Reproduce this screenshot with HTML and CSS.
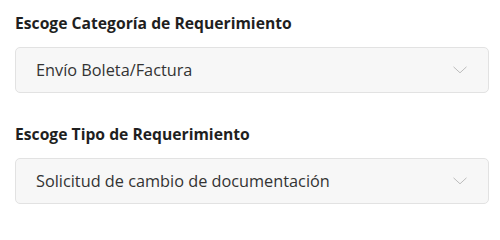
FILE: index.html
```html
<!DOCTYPE html>
<html lang="es">
<head>
<meta charset="utf-8">
<title>Requerimiento</title>
<link rel="stylesheet" href="styles.css">
</head>
<body>
<form class="form">
  <div class="field">
    <label class="label">Escoge Categoría de Requerimiento</label>
    <div class="select">
      <span class="value">Envío Boleta/Factura</span>
      <svg class="chev" width="14" height="8" viewBox="0 0 14 8"><path d="M0.5 0.8 L7 6.8 L13.5 0.8" fill="none" stroke="#bcbcbc" stroke-width="1"/></svg>
    </div>
  </div>
  <div class="field">
    <label class="label">Escoge Tipo de Requerimiento</label>
    <div class="select">
      <span class="value">Solicitud de cambio de documentación</span>
      <svg class="chev" width="14" height="8" viewBox="0 0 14 8"><path d="M0.5 0.8 L7 6.8 L13.5 0.8" fill="none" stroke="#bcbcbc" stroke-width="1"/></svg>
    </div>
  </div>
</form>
</body>
</html>
```
FILE: styles.css
```css
html, body {
  margin: 0;
  padding: 0;
  background: #ffffff;
}
body {
  font-family: "Open Sans", "Noto Sans", sans-serif;
  color: #222;
}
.form {
  display: flex;
  flex-direction: column;
  gap: 29px;
  padding: 11px 11px 0 15px;
}
.field {
  display: flex;
  flex-direction: column;
  gap: 12px;
}
.label {
  font-size: 15.7px;
  font-weight: 700;
  line-height: 24px;
  color: #1f1f1f;
}
.select {
  box-sizing: border-box;
  height: 46px;
  display: flex;
  align-items: center;
  justify-content: space-between;
  padding: 0 21px 0 20px;
  background: #f7f7f7;
  border: 1px solid #e2e2e2;
  border-radius: 5px;
}
.value {
  font-size: 16.3px;
  color: #333;
}
.chev {
  display: block;
}
```
